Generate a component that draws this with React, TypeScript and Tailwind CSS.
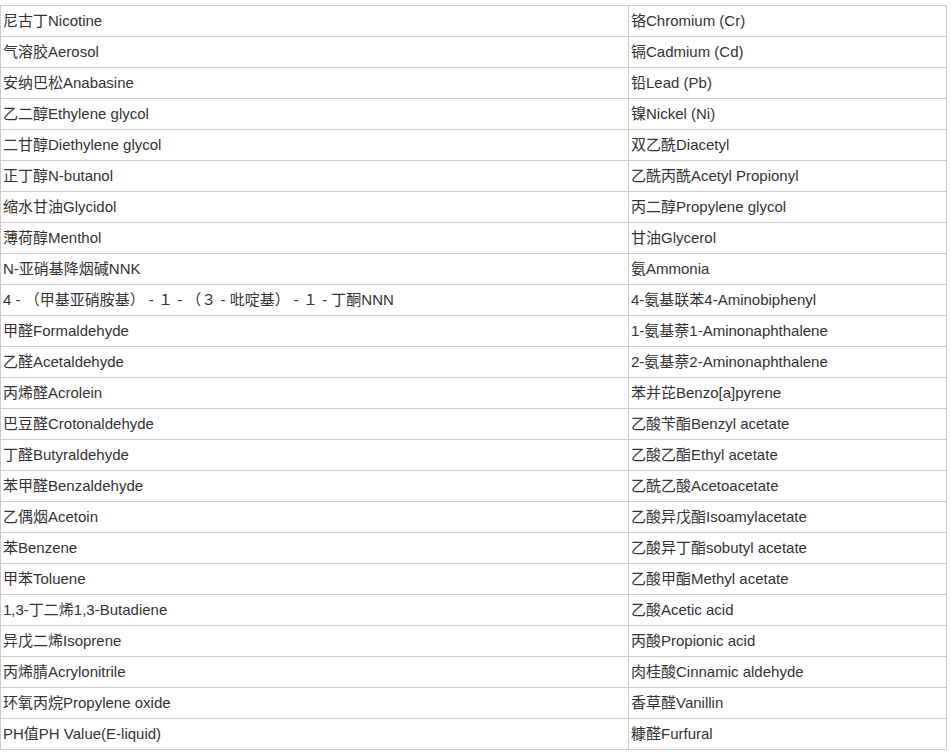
const rows: [string, string][] = [
    ["尼古丁Nicotine", "铬Chromium (Cr)"],
    ["气溶胶Aerosol", "镉Cadmium (Cd)"],
    ["安纳巴松Anabasine", "铅Lead (Pb)"],
    ["乙二醇Ethylene glycol", "镍Nickel (Ni)"],
    ["二甘醇Diethylene glycol", "双乙酰Diacetyl"],
    ["正丁醇N-butanol", "乙酰丙酰Acetyl Propionyl"],
    ["缩水甘油Glycidol", "丙二醇Propylene glycol"],
    ["薄荷醇Menthol", "甘油Glycerol"],
    ["N-亚硝基降烟碱NNK", "氨Ammonia"],
    ["4 - （甲基亚硝胺基） - １ - （３ - 吡啶基） - １ - 丁酮NNN", "4-氨基联苯4-Aminobiphenyl"],
    ["甲醛Formaldehyde", "1-氨基萘1-Aminonaphthalene"],
    ["乙醛Acetaldehyde", "2-氨基萘2-Aminonaphthalene"],
    ["丙烯醛Acrolein", "苯并芘Benzo[a]pyrene"],
    ["巴豆醛Crotonaldehyde", "乙酸苄酯Benzyl acetate"],
    ["丁醛Butyraldehyde", "乙酸乙酯Ethyl acetate"],
    ["苯甲醛Benzaldehyde", "乙酰乙酸Acetoacetate"],
    ["乙偶烟Acetoin", "乙酸异戊酯Isoamylacetate"],
    ["苯Benzene", "乙酸异丁酯sobutyl acetate"],
    ["甲苯Toluene", "乙酸甲酯Methyl acetate"],
    ["1,3-丁二烯1,3-Butadiene", "乙酸Acetic acid"],
    ["异戊二烯Isoprene", "丙酸Propionic acid"],
    ["丙烯腈Acrylonitrile", "肉桂酸Cinnamic aldehyde"],
    ["环氧丙烷Propylene oxide", "香草醛Vanillin"],
    ["PH值PH Value(E-liquid)", "糠醛Furfural"],
];

function App() {
    return (
        <div className="min-h-[753px] bg-white pt-[5px] font-['Liberation_Sans','Noto_Sans_CJK_SC',sans-serif] text-[15px] text-[#333]">
            <table className="w-[947px] border-collapse border border-[#cccccc]">
                <tbody>
                    {rows.map(([left, right], i) => (
                        <tr key={i} className="h-[31px]">
                            <td className="w-[628px] border border-[#cccccc] pl-[2px] align-middle">{left}</td>
                            <td className="border border-[#cccccc] pl-[2px] align-middle">{right}</td>
                        </tr>
                    ))}
                </tbody>
            </table>
        </div>
    );
}

export default App;
